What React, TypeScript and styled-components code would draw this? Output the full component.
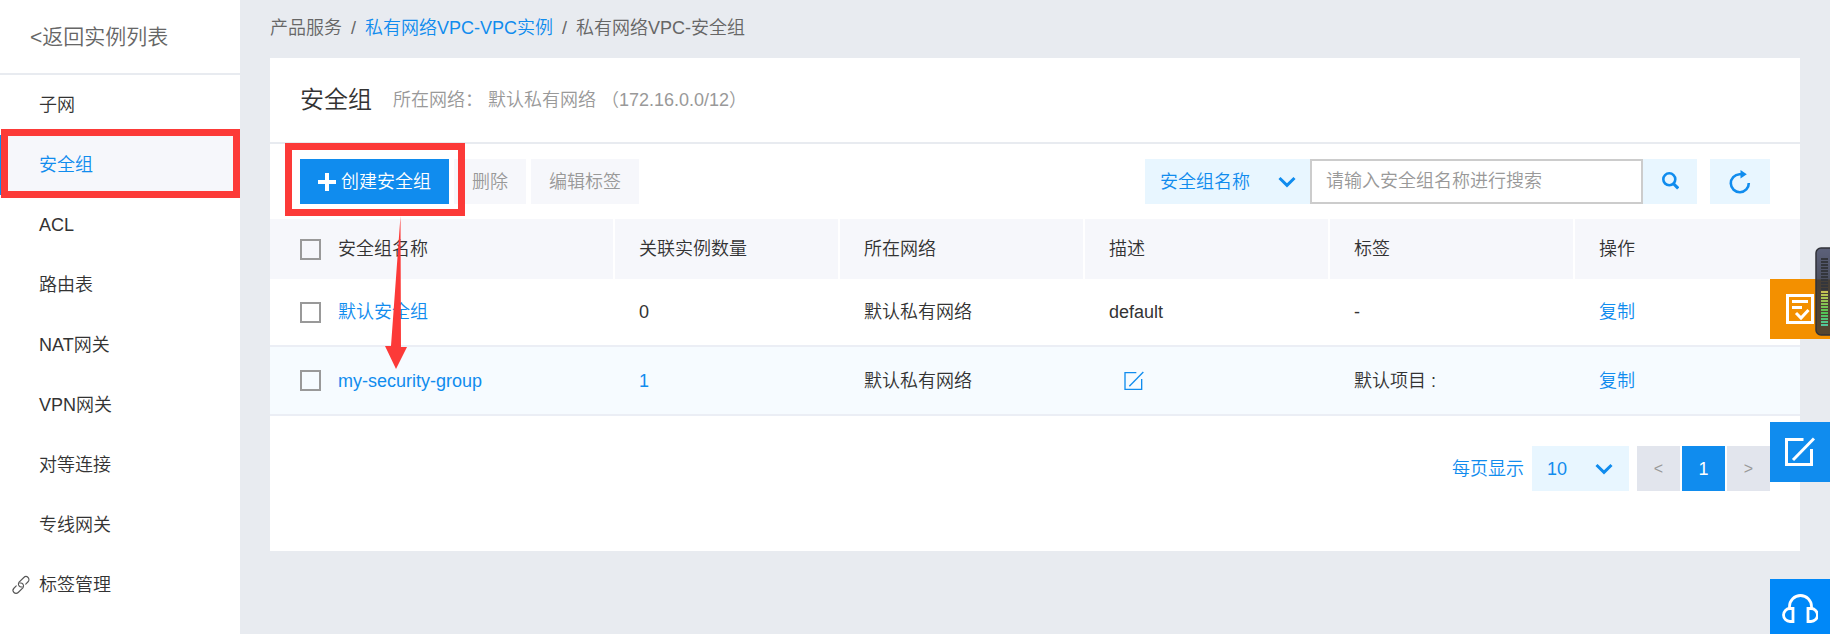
import React, { useState } from 'react';
import styled, { createGlobalStyle, css } from 'styled-components';

const blue = '#108cee';
const paleBlue = '#e8f6ff';
const paleGray = '#f6f7fb';
const pageGray = '#e8ebf0';
const annotationRed = '#fc3a38';

const GlobalStyle = createGlobalStyle`
  *, *::before, *::after { box-sizing: border-box; }
  body {
    margin: 0;
    background: ${pageGray};
    color: #333;
    font-family: "Liberation Sans", "Noto Sans CJK SC", sans-serif;
    font-size: 18px;
    font-weight: 350;
    line-height: 24px;
  }
  button, input, select { font: inherit; }
  button { border: 0; padding: 0; cursor: pointer; }
  a { color: ${blue}; text-decoration: none; }
`;

const Page = styled.div`
  display: flex;
  min-height: 100vh;
`;

const Sidebar = styled.nav`
  flex: 0 0 240px;
  background: #fff;
`;

const BackLink = styled.a`
  display: flex;
  align-items: center;
  height: 75px;
  padding: 0 30px;
  border-bottom: 2px solid ${pageGray};
  color: #666;
  font-size: 21px;
`;

const NavList = styled.ul`
  margin: 0;
  padding: 0;
  list-style: none;
`;

const NavItem = styled.li`
  position: relative;
`;

const NavLink = styled.a<{ $active?: boolean }>`
  display: flex;
  align-items: center;
  height: 60px;
  padding-left: 36px;
  border-left: 3px solid transparent;
  color: #333;
  ${(p) =>
    p.$active &&
    css`
      border-color: ${blue};
      background: ${paleGray};
      color: ${blue};
    `}
`;

const NavIcon = styled.svg`
  width: 20px;
  height: 20px;
  margin: 0 8px 0 -28px;
`;

const NavHighlight = styled.span`
  position: absolute;
  inset: -6px 0 -3px 1px;
  border: 7px solid ${annotationRed};
  pointer-events: none;
  z-index: 2;
`;

const Main = styled.main`
  flex: 1;
  min-width: 0;
  padding: 0 30px 30px;
`;

const Breadcrumb = styled.nav`
  display: flex;
  align-items: center;
  gap: 9px;
  height: 58px;
  padding-bottom: 2px;
  color: #666;
`;

const Panel = styled.section`
  background: #fff;
`;

const PanelHeader = styled.header`
  display: flex;
  align-items: center;
  gap: 21px;
  height: 86px;
  padding: 0 30px;
  border-bottom: 2px solid ${pageGray};
`;

const Title = styled.h1`
  margin: 0;
  color: #333;
  font-size: 24px;
  font-weight: 350;
  line-height: 30px;
`;

const Network = styled.span`
  color: #999;
`;

const Toolbar = styled.div`
  display: flex;
  justify-content: space-between;
  gap: 30px;
  padding: 15px 30px;
`;

const Actions = styled.div`
  display: flex;
  gap: 5px;
`;

const ToolButton = styled.button<{ $primary?: boolean }>`
  display: flex;
  align-items: center;
  gap: 5px;
  height: 45px;
  padding: 0 18px;
  background: ${(p) => (p.$primary ? blue : paleGray)};
  color: ${(p) => (p.$primary ? '#fff' : '#999')};
  white-space: nowrap;
`;

const CreateSlot = styled.div`
  position: relative;
`;

const CreateHighlight = styled.span`
  position: absolute;
  inset: -16px -16px -12px -15px;
  border: 7px solid ${annotationRed};
  pointer-events: none;
  z-index: 2;
`;

const Arrow = styled.svg`
  position: absolute;
  top: 57px;
  left: 85px;
  width: 22px;
  height: 153px;
  pointer-events: none;
  z-index: 2;
`;

const Search = styled.form`
  display: flex;
`;

const Picker = styled.span<{ $wide?: boolean }>`
  display: grid;
  align-items: center;
  width: ${(p) => (p.$wide ? '165px' : '97px')};
  height: 45px;
  background: ${paleBlue};
  color: ${blue};

  > * { grid-area: 1 / 1; }
  > svg {
    justify-self: end;
    margin-right: ${(p) => (p.$wide ? '14px' : '16px')};
    pointer-events: none;
  }
`;

const Select = styled.select`
  width: 100%;
  height: 45px;
  padding: 0 15px;
  border: 0;
  appearance: none;
  background: transparent;
  color: ${blue};
`;

const SearchInput = styled.input`
  width: 333px;
  height: 45px;
  padding: 0 14px;
  border: 2px solid #ccc;
  border-radius: 0;
  background: #fff;
  color: #333;
  &::placeholder { color: #999; opacity: 1; }
`;

const IconButton = styled.button<{ $apart?: boolean }>`
  display: grid;
  place-items: center;
  width: ${(p) => (p.$apart ? '60px' : '54px')};
  height: 45px;
  margin-left: ${(p) => (p.$apart ? '13px' : '0')};
  background: ${paleBlue};
  color: ${blue};
`;

const Table = styled.table`
  width: 100%;
  table-layout: fixed;
  border-collapse: separate;
  border-spacing: 0;
`;

const HeadCell = styled.th`
  height: 60px;
  padding: 0 0 0 24px;
  border-right: 2px solid #fff;
  background: ${paleGray};
  font-weight: 350;
  text-align: left;
  &:first-child { padding-left: 30px; }
  &:last-child { border-right: 0; }
`;

const Cell = styled.td`
  height: 68px;
  padding: 0 0 0 24px;
  border-bottom: 2px solid #ebeef5;
  &:first-child { padding-left: 30px; }
`;

const Row = styled.tr<{ $hovered?: boolean }>`
  background: ${(p) => (p.$hovered ? '#f6fbff' : '#fff')};
  &:last-child ${Cell} { height: 69px; }
`;

const NameGroup = styled.div`
  display: flex;
  align-items: center;
  gap: 17px;
`;

const Checkbox = styled.input`
  appearance: none;
  width: 21px;
  height: 21px;
  margin: 0;
  border: 2px solid #999;
  background: transparent;
  &:checked { border-color: ${blue}; background: ${blue}; }
`;

const EditButton = styled.button`
  display: block;
  margin-left: 15px;
  background: transparent;
  color: ${blue};
  svg { display: block; }
`;

const Pagination = styled.footer`
  display: flex;
  align-items: center;
  justify-content: flex-end;
  gap: 8px;
  padding: 30px 30px 60px;
`;

const PageLabel = styled.label`
  color: ${blue};
`;

const Pager = styled.div`
  display: flex;
  gap: 2px;
`;

const PageButton = styled.button<{ $current?: boolean }>`
  width: 43px;
  height: 45px;
  background: ${(p) => (p.$current ? blue : '#e2e5ed')};
  color: ${(p) => (p.$current ? '#fff' : '#999')};
  font-size: ${(p) => (p.$current ? '18px' : '16px')};
`;

const FloatingButton = styled.button<{ $top: number; $color: string }>`
  position: fixed;
  top: ${(p) => p.$top}px;
  right: 0;
  display: grid;
  place-items: center;
  width: 60px;
  height: 60px;
  background: ${(p) => p.$color};
  color: #fff;
  z-index: 3;
`;

const Meter = styled.svg`
  position: fixed;
  top: 247px;
  right: 0;
  width: 15px;
  height: 89px;
  z-index: 4;
`;

const Chevron = () => (
  <svg width="18" height="12" viewBox="0 0 18 12" fill="none" stroke="currentColor" strokeWidth="3" aria-hidden="true">
    <path d="M1.5 2 9 9.3 16.5 2" />
  </svg>
);

const PlusIcon = () => (
  <svg width="18" height="18" viewBox="0 0 18 18" fill="currentColor" aria-hidden="true">
    <path d="M7 0h4v7h7v4h-7v7H7v-7H0V7h7z" />
  </svg>
);

const SearchIcon = () => (
  <svg width="18" height="20" viewBox="0 0 18 20" fill="none" stroke="currentColor" aria-hidden="true">
    <circle cx="8.3" cy="7.3" r="6" strokeWidth="2.6" />
    <path d="m12.300 11.500 4.900 5" strokeWidth="3.2" />
  </svg>
);

const RefreshIcon = () => (
  <svg width="24" height="24" viewBox="0 0 24 24" fill="none" stroke="currentColor" strokeWidth="2.6" aria-hidden="true">
    <path d="M14 4.200H11.500A9 9 0 1 0 20.800 13" />
    <path d="m12.500 0 6.300 4.200-6.300 4.300z" fill="currentColor" stroke="none" />
  </svg>
);

const EditIcon = ({ size, stroke }: { size: number; stroke: number }) => (
  <svg width={size} height={size} viewBox="0 0 30 30" fill="none" stroke="currentColor" strokeWidth={stroke} aria-hidden="true">
    <path d="M18.5 2.500h-17v25h25V12" />
    <path d="M8 23 29 1.5" />
  </svg>
);

const LinkIcon = () => (
  <NavIcon viewBox="0 0 20 20" fill="none" stroke="#555" strokeWidth="1.100" strokeLinecap="round" aria-hidden="true">
    <g transform="rotate(-45 10 10)">
      <path d="M9.500 12.200a3 3 0 0 1 .8-5.500h7a3 3 0 0 1 0 6h-3.300" />
      <path d="M10.500 7.800a3 3 0 0 1-.8 5.500h-7a3 3 0 0 1 0-6H6" />
    </g>
  </NavIcon>
);

const FormIcon = () => (
  <svg width="28" height="30" viewBox="0 0 28 30" fill="none" stroke="currentColor" strokeWidth="3" aria-hidden="true">
    <path d="M1.5 1.500h25v27h-25zM6 7.500h16M6 13.500h10" />
    <path d="m10 19 5 5 7.500-8" />
  </svg>
);

const HeadsetIcon = () => (
  <svg width="36" height="30" viewBox="0 0 36 30" fill="none" stroke="currentColor" strokeWidth="2.8" aria-hidden="true">
    <path d="M7.500 15v-2.500a11 11 0 0 1 22 0V15" />
    <path d="M11 14.500v13H8a6.500 6.500 0 0 1 0-13zM26 14.500v13h3a6.500 6.500 0 0 0 0-13z" />
  </svg>
);

const meterColor = (index: number) => (index < 11 ? '#34363c' : `hsl(${58 + (index - 11) * 9}, 50%, 55%)`);

const LevelMeter = () => (
  <Meter viewBox="0 0 15 89" aria-hidden="true">
    <defs>
      <linearGradient id="meter-body" x1="0" y1="0" x2="0" y2="1">
        <stop offset="0" stopColor="#5c617a" />
        <stop offset="0.35" stopColor="#4d5162" />
        <stop offset="0.37" stopColor="#463f38" />
        <stop offset="1" stopColor="#564630" />
      </linearGradient>
    </defs>
    <path d="M16 1H6a5 5 0 0 0-5 5v77a5 5 0 0 0 5 5h10z" fill="url(#meter-body)" stroke="#303238" strokeWidth="1.5" />
    {Array.from({ length: 23 }, (_, i) => (
      <rect key={i} x="6" y={11 + i * 3} width="7" height="2" fill={meterColor(i)} />
    ))}
  </Meter>
);

const navItems = ['子网', '安全组', 'ACL', '路由表', 'NAT网关', 'VPN网关', '对等连接', '专线网关', '标签管理'];

const columns = [
  { title: '安全组名称', width: 345 },
  { title: '关联实例数量', width: 225 },
  { title: '所在网络', width: 245 },
  { title: '描述', width: 245 },
  { title: '标签', width: 245 },
  { title: '操作', width: 225 },
];

const groups = [
  { name: '默认安全组', count: 0, network: '默认私有网络', description: 'default', tag: '-' },
  { name: 'my-security-group', count: 1, network: '默认私有网络', description: '', tag: '默认项目 :' },
];

export default function App() {
  const [selected, setSelected] = useState<string[]>([]);
  const toggle = (name: string) =>
    setSelected((all) => (all.includes(name) ? all.filter((n) => n !== name) : [...all, name]));
  const toggleAll = () => setSelected((all) => (all.length === groups.length ? [] : groups.map((g) => g.name)));

  return (
    <>
      <GlobalStyle />
      <Page>
        <Sidebar>
          <BackLink href="#instances">&lt;返回实例列表</BackLink>
          <NavList>
            {navItems.map((item) => {
              const active = item === '安全组';
              return (
                <NavItem key={item}>
                  <NavLink href={`#${item}`} $active={active} aria-current={active ? 'page' : undefined}>
                    {item === '标签管理' && <LinkIcon />}
                    {item}
                  </NavLink>
                  {active && <NavHighlight />}
                </NavItem>
              );
            })}
          </NavList>
        </Sidebar>

        <Main>
          <Breadcrumb>
            <span>产品服务</span>
            <span>/</span>
            <a href="#vpc">私有网络VPC-VPC实例</a>
            <span>/</span>
            <span>私有网络VPC-安全组</span>
          </Breadcrumb>

          <Panel>
            <PanelHeader>
              <Title>安全组</Title>
              <Network>所在网络： 默认私有网络 （172.16.0.0/12）</Network>
            </PanelHeader>

            <Toolbar>
              <Actions>
                <CreateSlot>
                  <ToolButton type="button" $primary>
                    <PlusIcon />
                    创建安全组
                  </ToolButton>
                  <CreateHighlight />
                  <Arrow viewBox="0 0 22 153" aria-hidden="true">
                    <path d="M15.500 0 16 131h6L11 153 0 130h6z" fill={annotationRed} />
                  </Arrow>
                </CreateSlot>
                <ToolButton type="button">删除</ToolButton>
                <ToolButton type="button">编辑标签</ToolButton>
              </Actions>

              <Search onSubmit={(e: React.FormEvent) => e.preventDefault()}>
                <Picker $wide>
                  <Select aria-label="搜索字段">
                    <option>安全组名称</option>
                  </Select>
                  <Chevron />
                </Picker>
                <SearchInput type="text" aria-label="搜索" placeholder="请输入安全组名称进行搜索" />
                <IconButton type="submit" aria-label="搜索">
                  <SearchIcon />
                </IconButton>
                <IconButton type="button" aria-label="刷新" $apart>
                  <RefreshIcon />
                </IconButton>
              </Search>
            </Toolbar>

            <Table>
              <colgroup>
                {columns.map((c) => (
                  <col key={c.title} width={c.width} />
                ))}
              </colgroup>
              <thead>
                <tr>
                  {columns.map((c, i) => (
                    <HeadCell key={c.title} scope="col">
                      {i === 0 ? (
                        <NameGroup>
                          <Checkbox
                            type="checkbox"
                            aria-label="全选"
                            checked={selected.length === groups.length}
                            onChange={toggleAll}
                          />
                          {c.title}
                        </NameGroup>
                      ) : (
                        c.title
                      )}
                    </HeadCell>
                  ))}
                </tr>
              </thead>
              <tbody>
                {groups.map((g, i) => (
                  <Row key={g.name} $hovered={i === 1}>
                    <Cell>
                      <NameGroup>
                        <Checkbox
                          type="checkbox"
                          aria-label={g.name}
                          checked={selected.includes(g.name)}
                          onChange={() => toggle(g.name)}
                        />
                        <a href="#detail">{g.name}</a>
                      </NameGroup>
                    </Cell>
                    <Cell>{g.count > 0 ? <a href="#related">{g.count}</a> : g.count}</Cell>
                    <Cell>{g.network}</Cell>
                    <Cell>
                      {g.description || (
                        <EditButton type="button" aria-label="编辑描述">
                          <EditIcon size={20} stroke={2} />
                        </EditButton>
                      )}
                    </Cell>
                    <Cell>{g.tag}</Cell>
                    <Cell>
                      <a href="#copy">复制</a>
                    </Cell>
                  </Row>
                ))}
              </tbody>
            </Table>

            <Pagination>
              <PageLabel htmlFor="page-size">每页显示</PageLabel>
              <Picker>
                <Select id="page-size">
                  <option>10</option>
                </Select>
                <Chevron />
              </Picker>
              <Pager>
                <PageButton type="button" aria-label="上一页">&lt;</PageButton>
                <PageButton type="button" $current aria-current="page">1</PageButton>
                <PageButton type="button" aria-label="下一页">&gt;</PageButton>
              </Pager>
            </Pagination>
          </Panel>
        </Main>
      </Page>

      <FloatingButton type="button" aria-label="问卷" $top={279} $color="#f39000">
        <FormIcon />
      </FloatingButton>
      <FloatingButton type="button" aria-label="反馈" $top={422} $color={blue}>
        <EditIcon size={30} stroke={3} />
      </FloatingButton>
      <FloatingButton type="button" aria-label="客服" $top={579} $color="#0088f8">
        <HeadsetIcon />
      </FloatingButton>
      <LevelMeter />
    </>
  );
}
